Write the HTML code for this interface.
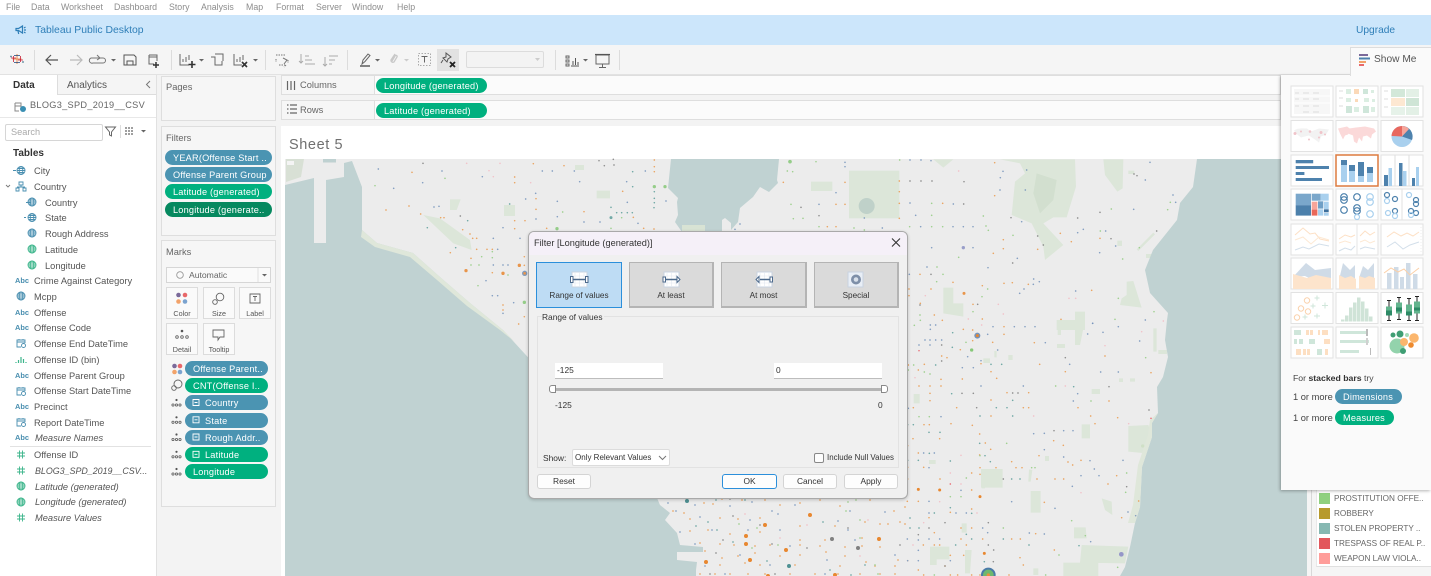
<!DOCTYPE html>
<html><head><meta charset="utf-8"><title>Tableau Public Desktop</title>
<style>
*{box-sizing:border-box}
html,body{margin:0;padding:0;width:1431px;height:576px;overflow:hidden;background:#f3f3f3;font-family:"Liberation Sans",sans-serif;color:#444}
.a{position:absolute;white-space:nowrap}
.t{position:absolute;white-space:nowrap;font-size:9.3px;line-height:12px;color:#555;margin-top:1px}
.m{position:absolute;top:1px;font-size:8.8px;line-height:12px;color:#8d8d8d;white-space:nowrap}
.i{font-style:italic}
.card{position:absolute;background:#f6f6f6;border:1px solid #dedede}
.p{position:absolute;border-radius:8px;color:#fff;font-size:9.2px;line-height:16px;height:15px;padding-left:8px;white-space:nowrap;overflow:hidden;letter-spacing:.2px}
.b{background:#4b94b2}.g{background:#00b07f}.dg{background:#06895f}
.mc{position:absolute;width:32px;height:32px;background:#fafafa;border:1px solid #dcdcdc;font-size:7.2px;color:#555;text-align:center;padding-top:21px;line-height:9px}
.db{position:absolute;top:262px;height:46px;background:#dadada;border:1px solid #b4b4b4;border-width:1px 2px 2px 1px;font-size:8.2px;color:#333;text-align:center;line-height:12px;padding-top:27px}
.btn{position:absolute;top:474px;height:15px;background:#fdfdfd;border:1px solid #d4d4d4;border-radius:3px;font-size:8.4px;color:#333;text-align:center;line-height:13px}
.d{font-size:8.4px;color:#333;position:absolute;line-height:12px;white-space:nowrap}
.inp{position:absolute;top:363px;height:16px;width:108px;background:#fff;border-bottom:1px solid #bdbdbd;font-size:8.4px;color:#333;line-height:15px;padding-left:2px}
.lg{position:absolute;left:1334px;font-size:8.2px;color:#666;line-height:12px;white-space:nowrap}
.sw{position:absolute;left:1319px;width:11px;height:11px}
svg{position:absolute;overflow:visible}
</style></head><body>

<!-- menu -->
<div class="a" style="left:0;top:0;width:1431px;height:15px;background:#fff"></div>
<div class="m" style="left:6px">File</div><div class="m" style="left:31px">Data</div><div class="m" style="left:61px">Worksheet</div><div class="m" style="left:114px">Dashboard</div><div class="m" style="left:169px">Story</div><div class="m" style="left:201px">Analysis</div><div class="m" style="left:246px">Map</div><div class="m" style="left:276px">Format</div><div class="m" style="left:316px">Server</div><div class="m" style="left:352px">Window</div><div class="m" style="left:397px">Help</div>

<!-- blue bar -->
<div class="a" style="left:0;top:15px;width:1431px;height:30px;background:#cce6fb"></div>
<div class="a" style="left:35px;top:24px;font-size:10.4px;line-height:14px;color:#2f7fb8">Tableau Public Desktop</div>
<div class="a" style="left:1356px;top:24px;font-size:10.2px;line-height:14px;color:#2f7fb8">Upgrade</div>
<svg style="left:0;top:0" width="40" height="45" viewBox="0 0 40 45" fill="none" stroke="#2f7fb8" stroke-width="1.2"><path d="M16 28.5h2.5l4-2.500v7l-4-2.500H16zM18 31l.7 3M24 28l1.500-1M24 30h2M24 32l1.500 1"/></svg>

<!-- toolbar -->
<div class="a" style="left:0;top:45px;width:1431px;height:30px;background:#f5f5f5;border-bottom:1px solid #e2e2e2"></div>
<div class="a" style="left:437px;top:49px;width:22px;height:22px;background:#e2e2e2"></div>
<div class="a" style="left:466px;top:51px;width:78px;height:17px;background:#f3f3f3;border:1px solid #dcdcdc;border-radius:2px"></div>
<svg style="left:0;top:45px" width="640" height="30" viewBox="0 45 640 30" fill="none" stroke="#555" stroke-width="1">
<path d="M34.500 50v20M171.500 50v20M265.500 50v20M347.500 50v20M555.500 50v20M619.500 50v20" stroke="#dcdcdc"/>
<g stroke-width=".8"><path d="M17 54v10M12.500 59h9" stroke="#e8762d"/><path d="M13.500 56v6M11 58h5M20.500 56v6M18 60h5" stroke="#c72037"/><path d="M14 62.500h6M14 55.500h6" stroke="#1f447a"/><path d="M11 55.500v2M10 56.500h2M23 61v2M22 62h2" stroke="#5b879b"/></g>
<path d="M58 60H46M51 55l-5 5 5 5" stroke="#555" stroke-width="1.200"/><path d="M70 60h12M77 55l5 5-5 5" stroke="#bbb" stroke-width="1.200"/>
<path d="M91 58h12a2.500 2.500 0 010 5H93a2.500 2.500 0 01-2-5M97 55l3 3-3 2" stroke="#777"/>
<path d="M111 59h5l-2.500 2.500z M199 59h5l-2.500 2.500z M253 59h5l-2.500 2.500z M375 59h5l-2.500 2.500z M583 59h5l-2.500 2.500z" fill="#666" stroke="none"/><path d="M404 59h5l-2.500 2.500z" fill="#ccc" stroke="none"/>
<path d="M124 55h10l2 2v8h-12zM127 65v-4h6v4"/>
<path d="M149 55h8v6M149 55v9h5M149 57h8" stroke="#666"/><path d="M156 62v6M153 65h6" stroke="#333" stroke-width="1.500"/>
<path d="M180 54v11h9M183 62v-3M186 62v-5M189 60v-5" stroke="#666"/><path d="M192 61v7M188.500 64.500h7" stroke="#333" stroke-width="1.600"/>
<path d="M211 57h4v8h7v-4M215 54h8v7" stroke="#666"/>
<path d="M234 54v11h8M237 62v-3M240 62v-5M243 60v-5" stroke="#666"/><path d="M242 62l5 5M247 62l-5 5" stroke="#333" stroke-width="1.600"/>
<path d="M276 55h9M276 59v3M288 60v3M279 65h6M286 65l-2 2" stroke="#777" stroke-dasharray="1.500 1"/><path d="M283 58l4 2-3 4" stroke="#777"/>
<path d="M301 54v9M299 61l2 2 2-2M305 56h4M305 60h7M305 64h10" stroke="#aaa"/>
<path d="M325 66v-9M323 64l2 2 2-2M329 56h9M329 60h6M329 64h3" stroke="#aaa"/>
<path d="M360 66h10" stroke="#444" stroke-width="1.300"/><path d="M362 64l1-4 5-6 2 1.500-5 6z" stroke="#666"/>
<path d="M395 54l-4 6a2 2 0 003 2l3-5a1 1 0 00-2-1l-3 5" stroke="#c8c8c8" stroke-width="1.300"/>
<rect x="418.500" y="53.500" width="12" height="12" stroke="#aaa" stroke-dasharray="1.500 1.500"/><path d="M421.500 56.500h6M424.500 56.500v6" stroke="#666"/>
<path d="M446 53l5 4-3 2-1 3-4-4 3-1zM443 60l-2 3" stroke="#555"/><path d="M450 62l5 5M455 62l-5 5" stroke="#222" stroke-width="1.800"/>
<path d="M535 58h5l-2.500 3z" fill="#ccc" stroke="none"/>
<path d="M566 56h3v2h-3zM566 60h3v2h-3zM566 64h3v2h-3z" stroke="#666"/><path d="M571 66h8M573 65v-4M575.500 65v-7M578 65v-3" stroke="#555"/>
<path d="M596 55h13v9h-13zM602.500 64v3M599 67.500h7" stroke="#666"/>
<path d="M595 54.500h15" stroke="#555" stroke-width="1.200"/>
</svg>

<!-- left data pane -->
<div class="a" style="left:0;top:75px;width:157px;height:501px;background:#fff;border-right:1px solid #e1e1e1"></div>
<div class="a" style="left:57px;top:75px;width:99px;height:20px;background:#f5f5f5;border-left:1px solid #ddd;border-bottom:1px solid #ddd"></div>
<div class="a" style="left:13px;top:79px;font-size:10px;line-height:13px;color:#333;font-weight:700">Data</div>
<div class="a" style="left:67px;top:79px;font-size:10px;line-height:13px;color:#555">Analytics</div>
<svg style="left:0;top:75px" width="157" height="70" viewBox="0 75 157 70" fill="none" stroke="#777">
<path d="M150 81l-3.500 3.500 3.500 3.500"/>
<path d="M15 103h6v5M15 103v8h4M15 106h6" stroke="#888"/><circle cx="23" cy="109" r="3" fill="#3a8fb3" stroke="none"/>
<circle cx="94.500" cy="131" r="2.700"/><path d="M92.500 133l-2 2.500" stroke-width="1.200"/>
<path d="M105.500 127h10l-4 5v4l-2 -1v-3z" stroke="#666"/><path d="M120.500 125v13" stroke="#ddd"/>
<path d="M125 128h8M125 131h8M125 134h8" stroke="#666" stroke-width="1.200" stroke-dasharray="2 1"/>
<path d="M141 130h5l-2.500 2.500z" fill="#666" stroke="none"/>
</svg>
<div class="a" style="left:30px;top:99px;font-size:9.2px;line-height:12px;color:#666;letter-spacing:.3px">BLOG3_SPD_2019__CSV</div>
<div class="a" style="left:0;top:117px;width:156px;height:1px;background:#e8e8e8"></div>
<div class="a" style="left:5px;top:124px;width:98px;height:17px;background:#fff;border:1px solid #d6d6d6;border-radius:2px;font-size:9.2px;line-height:15px;color:#aaa;padding-left:5px">Search</div>
<div class="a" style="left:13px;top:147px;font-size:10px;line-height:13px;color:#333;font-weight:700">Tables</div>

<div class="t" style="left:34px;top:164px">City</div>
<div class="t" style="left:34px;top:180px">Country</div>
<div class="t" style="left:45px;top:196px">Country</div>
<div class="t" style="left:45px;top:211px">State</div>
<div class="t" style="left:45px;top:227px">Rough Address</div>
<div class="t" style="left:45px;top:243px">Latitude</div>
<div class="t" style="left:45px;top:259px">Longitude</div>
<div class="t" style="left:34px;top:274px">Crime Against Category</div>
<div class="t" style="left:34px;top:290px">Mcpp</div>
<div class="t" style="left:34px;top:306px">Offense</div>
<div class="t" style="left:34px;top:321px">Offense Code</div>
<div class="t" style="left:34px;top:337px">Offense End DateTime</div>
<div class="t" style="left:34px;top:353px">Offense ID (bin)</div>
<div class="t" style="left:34px;top:369px">Offense Parent Group</div>
<div class="t" style="left:34px;top:384px">Offense Start DateTime</div>
<div class="t" style="left:34px;top:400px">Precinct</div>
<div class="t" style="left:34px;top:416px">Report DateTime</div>
<div class="t i" style="left:35px;top:431px">Measure Names</div>
<div class="a" style="left:10px;top:446px;width:141px;height:1px;background:#e2e2e2"></div>
<div class="t" style="left:34px;top:448px">Offense ID</div>
<div class="t i" style="left:35px;top:464px;font-size:8.9px">BLOG3_SPD_2019__CSV...</div>
<div class="t i" style="left:35px;top:480px">Latitude (generated)</div>
<div class="t i" style="left:35px;top:495px">Longitude (generated)</div>
<div class="t i" style="left:35px;top:511px">Measure Values</div>

<div class="a" style="left:15px;top:275px;font-size:7.4px;line-height:11px;color:#4a8fb0;font-weight:700">Abc</div>
<div class="a" style="left:15px;top:307px;font-size:7.4px;line-height:11px;color:#4a8fb0;font-weight:700">Abc</div>
<div class="a" style="left:15px;top:322px;font-size:7.4px;line-height:11px;color:#4a8fb0;font-weight:700">Abc</div>
<div class="a" style="left:15px;top:370px;font-size:7.4px;line-height:11px;color:#4a8fb0;font-weight:700">Abc</div>
<div class="a" style="left:15px;top:401px;font-size:7.4px;line-height:11px;color:#4a8fb0;font-weight:700">Abc</div>
<div class="a" style="left:15px;top:432px;font-size:7.4px;line-height:11px;color:#4a8fb0;font-weight:700">Abc</div>

<svg style="left:0;top:160px" width="40" height="370" viewBox="0 160 40 370" fill="none" stroke-width=".9">
<defs>
<g id="gl"><circle r="4"/><ellipse rx="1.800" ry="4"/><path d="M-4 0h8M-3.500-2h7M-3.500 2h7"/></g>
<g id="cal" stroke="#4a8fb0"><path d="M-4-3h8v2h-8zM-4-1v5h4M4-1v1M-2-4v1M2-4v1"/><circle cx="2.500" cy="2.500" r="2" fill="#fff"/></g>
<g id="num" stroke="#3cb58b"><path d="M-1.500-4v8M1.500-4v8M-4-1.500h8M-4 1.500h8"/></g>
</defs>
<g stroke="#4a8fb0">
<use href="#gl" x="21" y="170.500"/><path d="M13 170.500h3M31 202.500h-5M26 217.500h-2"/><use href="#gl" x="32" y="202"/><use href="#gl" x="32" y="217.500"/><use href="#gl" x="32" y="233"/><use href="#gl" x="21" y="296"/>
<path d="M6 185l2 2 2-2" stroke="#777"/><path d="M19 182h4v3h-4zM16 188h3v3h-3zM23 188h3v3h-3zM21 185v2M17.500 188v-1h7v1"/>
</g>
<g stroke="#3cb58b"><use href="#gl" x="32" y="249"/><use href="#gl" x="32" y="265"/><use href="#gl" x="21" y="486"/><use href="#gl" x="21" y="502"/></g>
<use href="#cal" x="21" y="343"/><use href="#cal" x="21" y="391"/><use href="#cal" x="21" y="422"/>
<path d="M16 363v-1M18.500 363v-3M21 363v-6M23.500 363v-4M26 363v-1" stroke="#3cb58b" stroke-width="1.200"/>
<use href="#num" x="21" y="454.500"/><use href="#num" x="21" y="470.500"/><use href="#num" x="21" y="517.500"/>
</svg>

<!-- middle cards -->
<div class="card" style="left:161px;top:76px;width:115px;height:45px"></div>
<div class="a" style="left:166px;top:81px;font-size:9.3px;line-height:12px;color:#666">Pages</div>
<div class="card" style="left:161px;top:126px;width:115px;height:110px"></div>
<div class="a" style="left:166px;top:132px;font-size:9.3px;line-height:12px;color:#666">Filters</div>
<div class="p b" style="left:165px;top:150px;width:107px">YEAR(Offense Start ..</div>
<div class="p b" style="left:165px;top:167px;width:107px">Offense Parent Group</div>
<div class="p g" style="left:165px;top:184px;width:107px">Latitude (generated)</div>
<div class="p dg" style="left:165px;top:202px;width:107px">Longitude (generate..</div>
<div class="card" style="left:161px;top:240px;width:115px;height:267px"></div>
<div class="a" style="left:166px;top:246px;font-size:9.3px;line-height:12px;color:#666">Marks</div>
<div class="a" style="left:166px;top:267px;width:105px;height:16px;background:#fafafa;border:1px solid #d6d6d6;font-size:8.6px;line-height:14px;color:#666;padding-left:22px">Automatic</div>
<div class="mc" style="left:166px;top:287px;height:32px">Color</div>
<div class="mc" style="left:203px;top:287px;height:32px">Size</div>
<div class="mc" style="left:239px;top:287px;height:32px">Label</div>
<div class="mc" style="left:166px;top:323px">Detail</div>
<div class="mc" style="left:203px;top:323px">Tooltip</div>
<div class="p b" style="left:185px;top:361px;width:83px">Offense Parent..</div>
<div class="p g" style="left:185px;top:378px;width:83px">CNT(Offense I..</div>
<div class="p b" style="left:185px;top:395px;width:83px;padding-left:20px">Country</div>
<div class="p b" style="left:185px;top:413px;width:83px;padding-left:20px">State</div>
<div class="p b" style="left:185px;top:430px;width:83px;padding-left:20px">Rough Addr..</div>
<div class="p g" style="left:185px;top:447px;width:83px;padding-left:20px">Latitude</div>
<div class="p g" style="left:185px;top:464px;width:83px">Longitude</div>
<svg style="left:160px;top:260px" width="120" height="225" viewBox="160 260 120 225" fill="none" stroke="#666" stroke-width=".9">
<circle cx="180" cy="275" r="3.300" stroke="#999"/><path d="M262 274h5l-2.500 2.500z" fill="#666" stroke="none"/><path d="M258 268v14" stroke="#ddd"/>
<circle cx="178.500" cy="295" r="2.300" fill="#7b6a9a" stroke="none"/><circle cx="185" cy="295" r="2.300" fill="#e8686a" stroke="none"/><circle cx="178.500" cy="301.500" r="2.300" fill="#f2a36a" stroke="none"/><circle cx="185" cy="301.500" r="2.300" fill="#7ba3cf" stroke="none"/>
<circle cx="220" cy="297" r="3.800"/><circle cx="215" cy="302" r="2.300"/>
<path d="M250 294h10v9h-10zM253 296.500h4M255 296.500v4.500"/>
<circle cx="182" cy="331" r="1.300" fill="#555" stroke="none"/><circle cx="177" cy="337" r="1.300"/><circle cx="182" cy="337" r="1.300"/><circle cx="187" cy="337" r="1.300"/>
<path d="M213 330h11v7h-4l-2 3v-3h-5z"/>
<circle cx="174.500" cy="366" r="2.300" fill="#7b6a9a" stroke="none"/><circle cx="180" cy="366" r="2.300" fill="#e8686a" stroke="none"/><circle cx="174.500" cy="372" r="2.300" fill="#f2a36a" stroke="none"/><circle cx="180" cy="372" r="2.300" fill="#7ba3cf" stroke="none"/>
<circle cx="178" cy="384" r="4"/><circle cx="174" cy="388" r="2.300"/>
<g id="dt"><circle cx="176.500" cy="400" r="1.100" fill="#555" stroke="none"/><circle cx="173" cy="405" r="1.100"/><circle cx="176.500" cy="405" r="1.100"/><circle cx="180" cy="405" r="1.100"/></g>
<use href="#dt" y="17.300"/><use href="#dt" y="34.500"/><use href="#dt" y="51.800"/><use href="#dt" y="69"/>
<g stroke="#fff" stroke-width=".9"><path d="M193 399.500h6v6h-6zM194.500 402.500h3M193 416.800h6v6h-6zM194.500 419.800h3M193 434h6v6h-6zM194.500 437h3M193 451.300h6v6h-6zM194.500 454.300h3"/></g>
</svg>

<!-- shelves -->
<div class="card" style="left:281px;top:75px;width:94px;height:20px"></div>
<div class="a" style="left:375px;top:75px;width:906px;height:20px;background:#fbfbfb;border:1px solid #dedede;border-left:0"></div>
<div class="card" style="left:281px;top:100px;width:94px;height:20px"></div>
<div class="a" style="left:375px;top:100px;width:906px;height:20px;background:#fbfbfb;border:1px solid #dedede;border-left:0"></div>
<div class="a" style="left:300px;top:79px;font-size:9.3px;line-height:12px;color:#666">Columns</div>
<div class="a" style="left:300px;top:104px;font-size:9.3px;line-height:12px;color:#666">Rows</div>
<div class="p g" style="left:376px;top:78px;width:111px">Longitude (generated)</div>
<div class="p g" style="left:376px;top:103px;width:111px">Latitude (generated)</div>
<svg style="left:280px;top:75px" width="30" height="45" viewBox="280 75 30 45" fill="none" stroke="#666"><path d="M287.500 81v9M291 81v9M294.500 81v9M287 82h1M290.500 82h1M294 82h1" stroke-width="1.200"/><path d="M287 106h1.500M290 106h7M287 110h1.500M290 110h7M287 114h1.500M290 114h7" stroke-width="1.200" transform="translate(0 -1)"/></svg>

<!-- worksheet -->
<div class="a" style="left:281px;top:126px;width:1000px;height:450px;background:#fff"></div>
<div class="a" style="left:289px;top:136px;font-size:14.5px;line-height:18px;color:#707070;letter-spacing:.6px">Sheet 5</div>

<!-- map -->
<svg style="left:285px;top:159px" width="1022" height="417" viewBox="285 159 1022 417">
<rect x="285" y="159" width="1022" height="417" fill="#ececec"/>
<!-- parks -->
<g fill="#dce6d9">
<path d="M286 159h18l-3 18-15 5z" fill="#d8e0d5"/>
<g transform="translate(280 130) scale(.33333)">
<path d="M430 255l50 10 90 65 5 30-55-20zM510 208h32l-12 32h-20zM672 225h33v33h-33zM885 105h27v15h-27zM950 182h40v23h-40z"/>
<path d="M1228 285h44v20h-44z"/>
</g>
<g transform="translate(780 130) scale(.33333)">
<rect x="207" y="122" width="151" height="143"/><circle cx="260" cy="228" r="24" fill="#bfd1c9"/>
<path d="M93 155h64v28H93zM660 88h225l3 82-28 92h-40l-30 18 60 65-55 45-5-40-35-70-60-25 10-100 30-25-15-30zM970 88h60l-2 87-16 10-37-50zM460 88h60l-30 25zM490 473h30v47h30v40l-60-10zM1040 455l20-2 25 80-65-8 5-20 15-10zM885 545h30v55h-85v-30h55z"/>
<path d="M770 130l60 20-10 60-40 40-20-60z" fill="#d2dfcf"/>
<path d="M1045 122h18v10h-18zM1012 332h14v16h-14zM1098 372h20v12h-20zM1070 358l50-50 5 5-50 50z"/>
</g>
<g transform="translate(905 320) scale(.33333)">
<path d="M670 318l60-3 10 30-15 55-55-5zM530 313h25v42h-25zM228 447h65v56h-65zM377 513h30v65h-30zM530 675l140 5-10 50-135-2zM475 728h105v40H475zM507 622h35l3 33h-38zM590 535l30 10 2 40-22-15zM75 680h58v38H95v17H75zM180 690h20l-5 70h-15zM510 0h30l-15 75h-15zM745 25h10v70h-10zM456 72h24v12h-24zM560 207h25v15h-25zM26 222h18v28H26zM268 93h7v19h-7zM310 105h13v15h-13zM458 0h10v45h-10zM170 610h15v28h-15zM385 745h15v20h-15zM230 483h10v22h-10zM760 90h26v12h-26zM642 175h12v11h-12zM675 175h15v10h-15zM420 408h12v15h-12zM372 448l10 2-5 35h-7zM72 420h20v12H72zM235 115h20v14h-20z"/>
</g>
</g>
<!-- water (absolute page coordinates) -->
<path fill="#c0d2d2" d="M285 185L314 178L314 243L326 243L326 180L344 177L344 163L352 161L362 187L362 230L377 243L413 253L440 277L470 303L503 330L657 498L660 505L670 513L665 520L677 533L680 545L703 547L703 552L677 552L677 560L697 562L696 570L696 576L285 576Z"/>
<path fill="#c0d2d2" d="M671 159L668 188L678 198L677 202L678 215L675 222L682 232L722 232L722 220L725 218L731 223L731 230L738 222L740 208L753 197L760 187L769 192L778 183L777 180L779 159Z"/>
<path fill="#c0d2d2" d="M1197 159L1193 187L1180 203L1177 220L1153 250L1145 270L1150 293L1168 313L1167 320L1165 340L1168 357L1163 377L1157 387L1158 413L1152 423L1152 437L1142 467L1140 507L1135 523L1130 547L1125 567L1120 576L1307 576L1307 159Z"/>
<!-- shore strips -->
<path fill="#dfe7da" d="M362 230L377 243L413 253L440 277L470 303L503 330L515 342L500 330L467 306L437 280L410 257L375 247L361 237Z"/>
<path fill="#dfe7da" d="M1158 413L1152 423L1152 437L1142 467L1140 507L1135 523L1128 523L1133 505L1138 465L1148 435L1150 420Z"/>
<rect x="682" y="225" width="23" height="7" fill="#d8e3d4"/>
<rect x="323" y="159" width="13" height="3.500" fill="#bfd1d1"/><rect x="287" y="161" width="7" height="4" fill="#f4f4f4"/>
<!-- dots zoom 7 -->
<g fill="none" stroke-linecap="round" transform="translate(280 130) scale(.33333)" stroke-width="5" opacity=".85">
<path stroke="#ea9a4e" d="M396 127h0M318 240h0M387 228h0M422 252h0M482 263h0M492 263h0M548 299h0M570 312h0M578 325h0M590 325h0M590 358h0M621 358h0M637 358h0M511 368h0M573 385h0M637 428h0M733 406h0M704 141h0M704 158h0M760 101h0M852 107h0M1123 90h0M1123 110h0M1123 125h0M704 272h0M735 272h0M768 238h0M768 206h0M800 295h0M1091 295h0M1122 297h0M1028 184h0M912 245h0M1060 262h0M704 296h0M733 380h0M669 525h0M669 540h0M716 582h0M733 560h0"/>
<path stroke="#7593bb" d="M295 117h0M428 158h0M341 175h0M486 123h0M607 140h0M462 231h0M477 229h0M787 123h0M817 123h0M883 123h0M899 155h0M1040 155h0M1096 123h0M1158 213h0M1042 217h0M832 214h0M767 190h0M737 207h0M768 267h0M832 260h0M912 276h0M960 276h0M1074 280h0M720 325h0M640 325h0M669 293h0M653 358h0M640 405h0M684 405h0M669 405h0M618 452h0M653 497h0M637 497h0M701 518h0M669 550h0M1365 298h0M1380 282h0"/>
<path stroke="#5d9e9a" d="M689 222h0M563 272h0M442 293h0M527 353h0M1123 185h0M1123 205h0M1123 218h0M1122 233h0M993 232h0M1010 248h0M1025 248h0M1042 248h0M1057 248h0M1058 125h0M1058 170h0"/>
<path stroke="#93cc82" d="M495 145h0M285 167h0M993 295h0M1025 263h0M848 246h0M605 380h0M637 383h0M637 365h0M573 405h0M597 405h0M684 435h0M594 467h0"/>
<path stroke="#808080" d="M429 100h0M541 258h0M1002 105h0M973 107h0M1000 88h0M957 92h0"/>
<path stroke="#f3bcc4" d="M560 100h0M660 100h0M627 122h0M640 140h0M752 158h0"/>
<path stroke="#87c878" stroke-width="10" d="M831 296h0M1155 170h0M1123 170h0M733 517h0"/>
<path stroke="#e8872f" stroke-width="10" d="M558 422h0M669 430h0M718 406h0"/>
<path stroke="#6f8db5" stroke-width="16" d="M734 430h0"/><path stroke="#e8872f" stroke-width="8" d="M734 430h0"/>
<path stroke="#5d9e9a" stroke-width="9" d="M993 263h0"/>
</g>
<!-- dots zoom 8 -->
<g fill="none" stroke-linecap="round" transform="translate(780 130) scale(.33333)" stroke-width="5" opacity=".85">
<path stroke="#7593bb" d="M195 97h0M195 110h0M390 90h0M423 90h0M453 92h0M740 120h0M669 124h0M661 143h0M660 180h0M736 180h0M168 188h0M117 223h0M390 219h0M407 256h0M520 222h0M253 264h0M307 294h0M422 290h0M519 290h0M550 290h0M579 290h0M1110 97h0M1096 150h0M1179 195h0M1187 217h0M1061 238h0M725 275h0M910 298h0M893 308h0M977 303h0M1007 348h0M959 368h0M455 353h0M579 353h0M712 385h0M624 413h0M441 411h0M388 433h0M761 447h0M778 455h0M760 463h0M719 490h0M732 477h0M887 483h0M1096 570h0M938 580h0"/>
<path stroke="#8b91c4" stroke-width="10" d="M550 353h0"/>
<path stroke="#ea9a4e" d="M10 157h0M195 157h0M358 153h0M358 185h0M358 220h0M195 223h0M168 223h0M142 290h0M168 290h0M358 265h0M488 220h0M644 98h0M644 197h0M670 329h0M670 356h0M640 370h0M773 358h0M874 335h0M960 325h0M841 310h0M607 467h0M672 460h0M697 458h0M745 463h0M935 481h0M420 433h0M453 477h0M519 457h0M387 477h0M387 497h0M421 520h0M579 523h0M463 555h0M487 571h0M607 567h0M843 568h0"/>
<path stroke="#e8872f" stroke-width="9" d="M552 490h0"/>
<path stroke="#93cc82" d="M108 95h0M22 123h0M38 125h0M33 223h0M40 266h0M69 265h0M117 290h0M222 294h0M253 300h0M359 90h0M389 290h0M455 290h0M488 290h0M455 220h0M455 256h0M610 258h0M618 288h0M625 301h0M699 316h0M536 382h0M471 411h0M489 433h0M470 455h0M623 477h0M606 500h0M579 545h0M403 586h0M420 555h0M421 571h0M1028 387h0M961 303h0M994 237h0M1171 217h0M1163 239h0M1078 353h0M1015 505h0M1122 545h0M1005 568h0"/>
<path stroke="#87c878" stroke-width="11" d="M30 95h0"/>
<path stroke="#808080" d="M63 232h0M117 257h0M390 153h0M423 153h0M552 155h0M456 153h0M551 222h0M693 263h0M773 318h0M790 345h0M698 399h0M960 247h0M893 264h0M993 326h0M1130 303h0M1062 132h0M1071 137h0M453 433h0M420 525h0M593 523h0"/>
<path stroke="#f3bcc4" d="M536 123h0M436 497h0M655 523h0M670 552h0M867 505h0M887 505h0M565 567h0M1150 573h0"/>
</g>
<!-- dots zoom 11 -->
<g fill="none" stroke-linecap="round" transform="translate(905 320) scale(.33333)" stroke-width="5">
<g opacity=".85">
<path stroke="#ea9a4e" d="M175 28h0M203 30h0M297 20h0M297 43h0M203 62h0M263 67h0M388 68h0M166 89h0M600 108h0M738 158h0M481 155h0M404 133h0M228 131h0M258 155h0M275 175h0M110 108h0M126 113h0M58 133h0M10 135h0M40 150h0M108 178h0M172 177h0M108 198h0M75 198h0M75 220h0M75 242h0M42 198h0M258 240h0M155 263h0M25 263h0M306 218h0M371 218h0M355 263h0M371 263h0M258 288h0M519 263h0M612 243h0M557 288h0M638 293h0M570 311h0M138 311h0M202 316h0M224 342h0M24 356h0M104 356h0M241 369h0M257 388h0M446 362h0M475 376h0M402 407h0M489 426h0M503 435h0M528 421h0M635 467h0M609 492h0M701 543h0M650 593h0M418 547h0M448 690h0M345 713h0M355 735h0M200 510h0M7 544h0M40 544h0M200 567h0M136 577h0M72 593h0M224 405h0M225 443h0M225 463h0M273 443h0M333 443h0M351 443h0M320 425h0M200 459h0M105 477h0M56 442h0M8 377h0M40 399h0M8 442h0M8 477h0M396 477h0M450 477h0M476 477h0M57 314h0M73 314h0M168 624h0M200 624h0M88 638h0M168 657h0M233 657h0M320 657h0M346 657h0M392 641h0M55 675h0M88 675h0M104 675h0M184 675h0M136 706h0M176 706h0M8 722h0M120 738h0M40 750h0M56 765h0M136 765h0M158 765h0M200 765h0M225 765h0M312 765h0"/>
<path stroke="#7593bb" d="M76 15h0M92 15h0M76 28h0M248 43h0M264 20h0M328 20h0M360 20h0M390 20h0M42 75h0M60 60h0M75 60h0M92 60h0M110 60h0M75 75h0M421 68h0M188 110h0M278 90h0M228 122h0M494 133h0M172 143h0M205 143h0M587 156h0M640 156h0M355 198h0M228 198h0M518 221h0M505 243h0M476 332h0M504 332h0M418 340h0M386 341h0M418 389h0M476 411h0M568 447h0M582 467h0M528 467h0M502 499h0M654 421h0M555 422h0M669 576h0M692 587h0M450 565h0M320 545h0M72 544h0M72 579h0M153 579h0M184 579h0M168 511h0M72 443h0M88 399h0M56 399h0M10 265h0M108 290h0M373 639h0M418 642h0M233 624h0M248 638h0M40 660h0M7 657h0M72 657h0M104 657h0M40 691h0M8 722h0M40 722h0M136 722h0M548 42h0M594 37h0M640 20h0M704 63h0M563 10h0M557 665h0"/>
<path stroke="#5d9e9a" d="M143 38h0M142 82h0M258 133h0M290 133h0M92 135h0M140 221h0M323 241h0M323 288h0M225 288h0M274 263h0M306 263h0M8 314h0M25 314h0M72 337h0M105 337h0M224 370h0M73 400h0M240 407h0M256 425h0M136 423h0M40 421h0M8 421h0M345 477h0M320 477h0M200 580h0M88 579h0M136 563h0M15 594h0M15 624h0M42 624h0M200 657h0M184 643h0M295 657h0M152 675h0M522 677h0M372 675h0M506 200h0M238 725h0"/>
<path stroke="#93cc82" d="M75 162h0M42 290h0M73 290h0M452 198h0M722 113h0M558 243h0M305 370h0M225 407h0M184 474h0M136 530h0M168 530h0M380 443h0M390 443h0M665 459h0M662 517h0M500 602h0M541 647h0M462 705h0M638 742h0M183 67h0M10 150h0M26 135h0M58 156h0M295 624h0M88 765h0M422 765h0"/>
<path stroke="#808080" d="M110 75h0M110 123h0M205 220h0M171 220h0M323 219h0M339 219h0M447 332h0M481 113h0M612 200h0M732 270h0M665 500h0M250 608h0M120 608h0M72 624h0M40 644h0M266 690h0M250 675h0M120 738h0M265 725h0M295 477h0M215 263h0"/>
<path stroke="#f3bcc4" d="M230 15h0M600 77h0M30 173h0M481 198h0M386 288h0M168 406h0M136 459h0M168 492h0M528 518h0M104 545h0M56 608h0M24 675h0M216 579h0M671 311h0M710 35h0"/>
<path stroke="#e8606a" d="M42 92h0M738 295h0M136 492h0"/>
</g>
<path stroke="#87c878" stroke-width="10" d="M200 90h0"/>
<path stroke="#e8872f" stroke-width="9" d="M238 700h0M40 508h0M104 510h0M225 530h0"/>
<circle cx="217" cy="47" r="9" fill="#7593bb"/><circle cx="217" cy="47" r="4.500" fill="#e8872f"/>
<circle cx="649" cy="703" r="7" fill="#9596c8"/><circle cx="713" cy="378" r="5" fill="#cfe0c6"/>
<circle cx="250" cy="765" r="22" fill="#4a7aa8"/><circle cx="250" cy="765" r="16" fill="#6fb86e"/><circle cx="250" cy="765" r="5" fill="#ea8d3a"/>
</g>
<!-- dots bottom centre (page coordinates) -->
<g fill="none" stroke-linecap="round" stroke-width="1.700">
<g opacity=".85">
<path stroke="#ea9a4e" d="M673 511h0M684 513h0M704 503h0M713 504h0M722 499h0M742 500h0M765 500h0M780 505h0M800 503h0M820 500h0M840 506h0M870 500h0M894 511h0M905 507h0M690 519h0M720 518h0M738 519h0M760 518h0M800 526h0M835 526h0M865 522h0M888 524h0M900 522h0M690 531h0M708 530h0M730 534h0M760 532h0M800 540h0M825 540h0M862 538h0M880 524h0M905 524h0M700 543h0M720 544h0M734 545h0M755 546h0M770 545h0M800 545h0M820 546h0M845 547h0M862 546h0M880 547h0M705 551h0M722 558h0M738 556h0M755 553h0M780 556h0M800 555h0M826 552h0M845 556h0M866 562h0M898 560h0M720 565h0M745 563h0M760 565h0M795 565h0M840 566h0M875 566h0M895 566h0M700 574h0M715 574h0M730 574h0M748 574h0M765 574h0M790 574h0M815 574h0M838 574h0M860 574h0M880 574h0M895 574h0"/>
<path stroke="#7593bb" d="M668 503h0M676 511h0M695 505h0M730 506h0M752 502h0M772 511h0M795 505h0M850 511h0M700 517h0M750 520h0M778 514h0M838 521h0M885 512h0M680 532h0M712 530h0M748 530h0M780 530h0M848 530h0M855 540h0M695 544h0M740 555h0M790 546h0M827 560h0M705 566h0M770 565h0M895 555h0M725 574h0M825 574h0"/>
<path stroke="#5d9e9a" d="M716 500h0M745 500h0M708 522h0M696 526h0M717 530h0M733 542h0M823 522h0M767 561h0M865 565h0M830 570h0M851 575h0"/>
<path stroke="#93cc82" d="M848 502h0M856 500h0M846 511h0M739 524h0M757 528h0M860 520h0M752 548h0M778 545h0M860 538h0M875 565h0M878 574h0"/>
<path stroke="#808080" d="M730 499h0M733 516h0M760 525h0M723 540h0M772 544h0M807 548h0M848 528h0M900 545h0M716 553h0M710 574h0M775 574h0"/>
<path stroke="#f3bcc4" d="M745 514h0M807 525h0M868 520h0M780 538h0M860 556h0"/>
</g>
<path stroke="#e8872f" stroke-width="4" d="M810 515h0M765 525h0M746 536h0M746 544h0M786 550h0M879 539h0M706 562h0M750 560h0M768 576h0M835 575h0"/>
<path stroke="#808080" stroke-width="4" d="M832 539h0M858 548h0"/><path stroke="#4f9193" stroke-width="4" d="M789 566h0M687 501h0"/>
</g>
</svg>

<!-- legend -->
<div class="a" style="left:1307px;top:490px;width:124px;height:86px;background:#f5f5f5"></div>
<div class="a" style="left:1311px;top:490px;width:1px;height:86px;background:#d8d8d8"></div>
<div class="a" style="left:1316px;top:490px;width:115px;height:77px;background:#fff;border-bottom:1px solid #e0e0e0;border-left:1px solid #e8e8e8"></div>
<div class="sw" style="top:493px;background:#8fd07f"></div><div class="lg" style="top:493px">PROSTITUTION OFFE..</div>
<div class="sw" style="top:508px;background:#b79a2d"></div><div class="lg" style="top:508px">ROBBERY</div>
<div class="sw" style="top:523px;background:#86b8b2"></div><div class="lg" style="top:523px">STOLEN PROPERTY ..</div>
<div class="sw" style="top:538px;background:#e2575c"></div><div class="lg" style="top:538px">TRESPASS OF REAL P..</div>
<div class="sw" style="top:553px;background:#ff9d9a"></div><div class="lg" style="top:553px">WEAPON LAW VIOLA..</div>

<!-- show me -->
<div class="a" style="left:1281px;top:75px;width:150px;height:415px;background:#fafafa;box-shadow:-1px 1px 3px rgba(0,0,0,.3)"></div>
<div class="a" style="left:1350px;top:47px;width:81px;height:29px;background:#fafafa;border-left:1px solid #ddd;border-top:1px solid #ddd"></div>
<div class="a" style="left:1374px;top:53px;font-size:10.2px;line-height:14px;color:#555">Show Me</div>
<svg style="left:1355px;top:50px" width="20" height="22" viewBox="1355 50 20 22"><rect x="1359" y="54" width="9" height="2" fill="#7b6a9a"/><rect x="1359" y="57.500" width="11" height="2" fill="#4e82ad"/><rect x="1359" y="61" width="7" height="2" fill="#f2a36a"/><rect x="1359" y="64" width="5" height="2" fill="#e8686a"/></svg>
<svg style="left:1281px;top:75px" width="150" height="290" viewBox="1281 75 150 290">
<defs>
<rect id="th" width="42" height="31" fill="#fff" stroke="#e2e2e2"/>
</defs>
<g>
<!-- row 1 -->
<g transform="translate(1291 86)"><use href="#th"/><g opacity=".5"><rect x="3" y="3" width="36" height="25" fill="#f0f0f0"/><path d="M4 7h4M12 7h6M22 7h6M4 13h4M12 13h6M22 13h6M4 20h4M12 20h6M22 20h6M12 26h6M22 26h6" stroke="#bbb"/><path d="M3 10h36M3 17h36" stroke="#fff"/></g></g>
<g transform="translate(1336 86)"><use href="#th"/><path d="M3 5h4M3 12h4M3 20h4" stroke="#ddd"/><g fill="#dbeee2"><rect x="10" y="3" width="5" height="5"/><rect x="27" y="3" width="5" height="5" fill="#cfe6da"/><rect x="10" y="12" width="5" height="4"/><rect x="35" y="4" width="3" height="3"/><rect x="28" y="12" width="5" height="4"/><rect x="36" y="13" width="3" height="3"/><rect x="10" y="20" width="6" height="7" fill="#cfe6da"/><rect x="18" y="21" width="5" height="5"/><rect x="27" y="20" width="6" height="7" fill="#cfe6da"/><rect x="35" y="21" width="4" height="5"/></g><rect x="18" y="3" width="5" height="5" fill="#fbd9b8"/><rect x="19" y="13" width="3" height="3" fill="#fbd9b8"/></g>
<g transform="translate(1381 86)"><use href="#th"/><path d="M3 5h4M3 13h4M3 21h4" stroke="#ddd"/><rect x="10" y="3" width="14" height="8" fill="#d3e8d9"/><rect x="25" y="3" width="13" height="8" fill="#e3f0e6"/><rect x="10" y="12" width="14" height="8" fill="#fde8d2"/><rect x="25" y="12" width="13" height="8" fill="#cfe5d6"/><rect x="10" y="21" width="14" height="8" fill="#e6f2e9"/><rect x="25" y="21" width="13" height="8" fill="#e3f0e6"/></g>
<!-- row 2 -->
<g transform="translate(1291 120.500)"><use href="#th"/><path d="M3 10c4-3 10-2 13-2l4 3 8-3 10 1-3 5-5 2-2 6-4-3-6-4-8 2-5-4z" fill="#f2f2f2"/><g fill="#f0c4ca"><circle cx="4" cy="13" r="1.500"/><circle cx="10" cy="11" r="1"/><circle cx="19" cy="11" r="1.300"/><circle cx="30" cy="12" r="1.500"/><circle cx="28" cy="17" r="1"/><circle cx="34" cy="14" r="1"/><circle cx="18" cy="19" r="1"/></g></g>
<g transform="translate(1336 120.500)"><use href="#th"/><path d="M2 8l9-2 4 3-3 5-3 1-2 4-3-6zM13 8l7-1 9-1 9 2 2 3-4 3-1 4-4-3-4 1-1 5-3-4-2 6-3-2-1-6-5-2z" fill="#fbd9d9"/></g>
<g transform="translate(1381 120.500)"><use href="#th"/><circle cx="21" cy="16" r="10.500" fill="#a9d0ee"/><path d="M21 16V5.500A10.500 10.500 0 0131 19.500z" fill="#4e82ad"/><path d="M21 16V5.500A10.500 10.500 0 0010.500 15.500z" fill="#e8685f"/><path d="M21 16V5.500a10 10 0 017 3z" fill="#f7a59a"/></g>
<!-- row 3 -->
<g transform="translate(1291 155)"><use href="#th"/><g fill="#4e82ad"><rect x="4.700" y="5" width="17.500" height="3.300"/><rect x="4.700" y="11" width="33.300" height="3"/><rect x="4.700" y="17" width="8.700" height="3"/><rect x="4.700" y="23" width="26.300" height="3"/></g></g>
<g transform="translate(1336 155)"><rect width="42" height="31" fill="#fff" stroke="#dd7b3f" stroke-width="1.500"/><g fill="#a9d0ee"><rect x="5" y="10" width="6" height="17"/><rect x="13" y="16" width="6" height="11"/><rect x="22" y="21" width="6" height="6"/><rect x="31" y="18" width="6" height="9"/></g><g fill="#4e82ad"><rect x="5" y="5" width="6" height="5"/><rect x="13" y="10" width="6" height="6"/><rect x="22" y="7" width="6" height="14"/><rect x="31" y="12" width="6" height="6"/></g></g>
<g transform="translate(1381 155)"><use href="#th"/><path d="M14 0v31M28 0v31" stroke="#ddd"/><g fill="#4e82ad"><rect x="3" y="20" width="4" height="11"/><rect x="18" y="8" width="3.500" height="23"/><rect x="31" y="23" width="3" height="8"/></g><g fill="#a9d0ee"><rect x="7.500" y="13" width="3.500" height="18"/><rect x="22" y="16" width="3.500" height="15"/><rect x="35" y="12" width="3" height="19"/></g></g>
<!-- row 4 -->
<g transform="translate(1291 189)"><use href="#th"/><rect x="4.700" y="4.700" width="15.300" height="11.700" fill="#7aa7cb"/><rect x="4.700" y="16.300" width="15.300" height="10.300" fill="#4c80ab"/><rect x="20.700" y="4.700" width="9" height="7" fill="#7aa7cb"/><rect x="29.700" y="4.700" width="8" height="7" fill="#a9d0ee"/><rect x="20.700" y="12.700" width="5.700" height="7.300" fill="#f7a59a"/><rect x="20.700" y="20.300" width="5.700" height="6.300" fill="#e9685a"/><rect x="27" y="12.300" width="5.300" height="7.300" fill="#6f9fc6"/><rect x="27" y="20.300" width="5.300" height="6.300" fill="#a9d0ee"/><rect x="33" y="12.700" width="4.700" height="7.300" fill="#a9d0ee"/><rect x="33" y="20.300" width="4.700" height="3" fill="#3d6f9c"/><rect x="33" y="24" width="4.700" height="2.700" fill="#a9d0ee"/></g>
<g transform="translate(1336 189)"><use href="#th"/><g fill="none" stroke-width="1.200"><g stroke="#4e82ad"><circle cx="8" cy="8" r="3.300"/><circle cx="8" cy="11" r="3.300"/><circle cx="21" cy="8" r="3.300"/><circle cx="21" cy="19" r="3.300"/><circle cx="21" cy="22" r="3.300"/><circle cx="8" cy="21" r="3.300"/></g><g stroke="#a9d0ee"><circle cx="34" cy="8" r="3.300"/><circle cx="34" cy="13" r="3.300"/><circle cx="34" cy="25" r="3.300"/><circle cx="21" cy="28" r="2.500"/></g></g></g>
<g transform="translate(1381 189)"><use href="#th"/><path d="M21 0v31" stroke="#e2e2e2"/><g fill="none" stroke-width="1.200"><g stroke="#4e82ad"><circle cx="6" cy="6" r="2.500"/><circle cx="14" cy="10" r="2.500"/><circle cx="14" cy="22" r="2.500"/><circle cx="35" cy="11" r="2.500"/><circle cx="35" cy="15" r="2.500"/><circle cx="30" cy="22" r="2.500"/><circle cx="35" cy="24" r="2.500"/></g><g stroke="#a9d0ee"><circle cx="6" cy="12" r="2.500"/><circle cx="7" cy="24" r="2.500"/><circle cx="14" cy="27" r="2.500"/><circle cx="28" cy="6" r="2.500"/><circle cx="30" cy="26" r="2.500"/></g></g></g>
<!-- row 5 -->
<g transform="translate(1291 224)" fill="none"><use href="#th"/><path d="M4 11l8-7 7 6 5-1 5 6 9 2" stroke="#fde0c5"/><path d="M4 16l8-3 8 7 8-7 10 3" stroke="#fde9d4"/><path d="M4 26l8-3 6 2 10-5 10 2" stroke="#d3dfea"/></g>
<g transform="translate(1336 224)" fill="none"><use href="#th"/><path d="M21 0v31" stroke="#e6e6e6"/><path d="M3 15l6-4 6 2 4-2M24 12l5-5 5 4 5-3" stroke="#fde0c5"/><path d="M3 19l6-2 6 2M24 18l5-2 5 3 5-2" stroke="#fde9d4"/><path d="M3 27l6-3 6 2 4-4M24 25l5-2 10 2" stroke="#d3dfea"/></g>
<g transform="translate(1381 224)" fill="none"><use href="#th"/><path d="M6 13l7-5 7 4 6-3 6 3 6-4" stroke="#fde0c5"/><path d="M6 23l8-5 8 7 7-4 9-3" stroke="#d3dfea"/><path d="M40 3v25" stroke="#eee" stroke-dasharray="1 2"/></g>
<!-- row 6 -->
<g transform="translate(1291 258)"><use href="#th"/><path d="M2 19l13-14 9 7 16-2v10l-16 3-10-5z" fill="#cfdbe7"/><path d="M2 16l14 4 9-3 15 3v11H2z" fill="#fde4cc"/></g>
<g transform="translate(1336 258)"><use href="#th"/><path d="M3 22l4-17 7 7 5-5v14H3zM23 20l4-12 5 4 6-7v15z" fill="#cfdbe7"/><path d="M3 17l6 3 6-2 5 3v10H3zM23 18l6 2 4-2 6 2v11H23z" fill="#fde4cc"/></g>
<g transform="translate(1381 258)"><use href="#th"/><g fill="#cfdbe7"><rect x="6" y="15" width="4.500" height="16"/><rect x="13" y="9" width="4.500" height="22"/><rect x="19" y="19" width="4" height="12"/><rect x="25" y="5" width="4.500" height="26"/><rect x="32" y="16" width="4.500" height="15"/></g><path d="M3 15l7-5 7 4 6-3 6 6 9-7" stroke="#fbd0a8" fill="none"/></g>
<!-- row 7 -->
<g transform="translate(1291 292.500)"><use href="#th"/><g fill="none" stroke="#fad2ad"><circle cx="6" cy="25" r="2.700"/><circle cx="10" cy="16" r="2.700"/><circle cx="17" cy="19" r="2.700"/><circle cx="16" cy="8" r="2.700"/></g><path d="M26 3v5M23.500 5.500h5M22 11v5M19.500 13.500h5M34 10v6M31 13h6M26 21v5M23 23.500h6M14 22v5M11.500 24.500h5" stroke="#cfe6da" fill="none"/></g>
<g transform="translate(1336 292.500)"><use href="#th"/><g fill="#cfe3d7"><rect x="5" y="27" width="3.500" height="2"/><rect x="9" y="23" width="3.500" height="6"/><rect x="13" y="15" width="3.500" height="14"/><rect x="17" y="10" width="3.500" height="19"/><rect x="21" y="5" width="3.500" height="24"/><rect x="25" y="9" width="3.500" height="20"/><rect x="29" y="16" width="3.500" height="13"/><rect x="33" y="24" width="3.500" height="5"/></g></g>
<g transform="translate(1381 292.500)"><use href="#th"/><path d="M8 8v20M6 8h4M6 28h4M18 5v22M16 5h4M16 27h4M28 6v22M26 6h4M26 28h4M36 4v24M34 4h4M34 28h4" stroke="#222" fill="none"/><g fill="#63b48e"><rect x="5" y="14" width="6" height="9"/><rect x="15" y="10" width="6" height="11"/><rect x="25" y="12" width="6" height="11"/><rect x="33" y="9" width="6" height="12"/></g><g fill="#2d8a66"><rect x="5" y="18" width="6" height="5"/><rect x="15" y="15" width="6" height="4"/><rect x="25" y="19" width="6" height="4"/><rect x="33" y="15" width="6" height="3"/></g></g>
<!-- row 8 -->
<g transform="translate(1291 327)"><use href="#th"/><g fill="#cfe6da"><rect x="3" y="3" width="7" height="5"/><rect x="3" y="12" width="3" height="5"/><rect x="8" y="12" width="4" height="5"/><rect x="18" y="12" width="6" height="5"/><rect x="26" y="22" width="5" height="6" /></g><g fill="#fddfc2"><rect x="15" y="3" width="3" height="5"/><rect x="19" y="3" width="3" height="5"/><rect x="27" y="3" width="2" height="5"/><rect x="31" y="3" width="6" height="5"/><rect x="33" y="12" width="6" height="5"/><rect x="5" y="22" width="5" height="6"/><rect x="12" y="22" width="3" height="6"/><rect x="16" y="22" width="3" height="6"/><rect x="34" y="22" width="3" height="6"/></g></g>
<g transform="translate(1336 327)"><use href="#th"/><rect x="4" y="4" width="26" height="3" fill="#cfe6da"/><rect x="4" y="13" width="29" height="3" fill="#cfe6da"/><rect x="4" y="23" width="19" height="3" fill="#cfe6da"/><rect x="30" y="2" width="2" height="7" fill="#bbb"/><rect x="30" y="11" width="2" height="7" fill="#d0d0d0"/><rect x="34" y="21" width="1" height="7" fill="#bbb"/></g>
<g transform="translate(1381 327)"><use href="#th"/><circle cx="16" cy="19" r="7.500" fill="#93d3ac"/><circle cx="12" cy="8" r="2.500" fill="#3f9e74"/><circle cx="19" cy="7" r="3.500" fill="#3f9e74"/><circle cx="26" cy="8" r="2" fill="#a5dcb9"/><circle cx="23" cy="15" r="4" fill="#fbb66d"/><circle cx="33" cy="11" r="4.800" fill="#fbb66d"/><circle cx="30" cy="18" r="2.800" fill="#ee8a2e"/><circle cx="22" cy="24" r="3" fill="#3f9e74"/></g>
</g>
</svg>
<div class="a" style="left:1293px;top:372px;font-size:8.7px;line-height:12px;color:#444">For <b style="color:#333">stacked bars</b> try</div>
<div class="a" style="left:1293px;top:391px;font-size:9.3px;line-height:12px;color:#444">1 or more</div>
<div class="a" style="left:1293px;top:412px;font-size:9.3px;line-height:12px;color:#444">1 or more</div>
<div class="p b" style="left:1335px;top:389px;width:67px;padding-left:8px">Dimensions</div>
<div class="p g" style="left:1335px;top:410px;width:59px;padding-left:8px">Measures</div>

<!-- dialog -->
<div class="a" style="left:528px;top:231px;width:380px;height:268px;background:#f0f0f0;border:1px solid #a9a9a9;border-radius:6px;overflow:hidden;box-shadow:0 1px 3px rgba(0,0,0,.2)"><div style="height:23px;background:#f5f0f8"></div></div>
<div class="d" style="left:534px;top:237px;font-size:9.2px">Filter [Longitude (generated)]</div>
<div class="db" style="left:536px;width:86px;background:#bedcf4;border:1px solid #2b8fdb">Range of values</div>
<div class="db" style="left:629px;width:85px">At least</div>
<div class="db" style="left:721px;width:86px">At most</div>
<div class="db" style="left:814px;width:85px">Special</div>
<div class="a" style="left:537px;top:316px;width:362px;height:152px;border:1px solid #e2e2e2"></div>
<div class="d" style="left:542px;top:311px;background:#f0f0f0;padding-right:1px;line-height:12px">Range of values</div>
<div class="inp" style="left:555px">-125</div>
<div class="inp" style="left:774px">0</div>
<div class="a" style="left:552px;top:388px;width:332px;height:3px;background:#b4b4b4"></div>
<div class="a" style="left:549px;top:385px;width:7px;height:8px;background:#fff;border:1px solid #888;border-radius:3px 0 0 3px"></div>
<div class="a" style="left:881px;top:385px;width:7px;height:8px;background:#fff;border:1px solid #888;border-radius:0 3px 3px 0"></div>
<div class="d" style="left:555px;top:399px">-125</div>
<div class="d" style="left:878px;top:399px">0</div>
<div class="d" style="left:543px;top:452px">Show:</div>
<div class="a" style="left:572px;top:449px;width:98px;height:17px;background:#fff;border:1px solid #dcdcdc;border-radius:2px;font-size:8px;color:#333;line-height:15px;padding-left:2px">Only Relevant Values</div>
<div class="a" style="left:814px;top:453px;width:10px;height:10px;background:#fdfdfd;border:1px solid #888;border-radius:2px"></div>
<div class="d" style="left:827px;top:452px;font-size:7.9px">Include Null Values</div>
<div class="btn" style="left:537px;width:54px">Reset</div>
<div class="btn" style="left:722px;width:55px;border:1px solid #2b8fdb">OK</div>
<div class="btn" style="left:783px;width:54px">Cancel</div>
<div class="btn" style="left:844px;width:54px">Apply</div>
<svg style="left:528px;top:231px" width="380" height="240" viewBox="528 231 380 240" fill="none">
<path d="M892 238.500l8 8M900 238.500l-8 8" stroke="#333" stroke-width="1.100"/>
<path d="M659 456l3.500 3.500 3.500-3.500" stroke="#777"/>
<g stroke="#c8d3e0" fill="#fff"><rect x="572" y="272" width="15" height="15"/><rect x="664" y="272" width="15" height="15"/><rect x="757" y="272" width="15" height="15"/><rect x="848" y="272" width="15" height="15" fill="#e8eef6"/></g>
<path d="M575 272v15M579.500 272v15M584 272v15M572 276h15M572 283h15M667 272v15M671.500 272v15M676 272v15M664 276h15M664 283h15M760 272v15M764.500 272v15M769 272v15M757 276h15M757 283h15" stroke="#e2e8f0" stroke-width=".6"/>
<g stroke="#4d6a8c"><path d="M573 279.500h13" stroke-width="1.500"/><rect x="570.500" y="276.500" width="2.500" height="6" fill="#fff"/><rect x="585.500" y="276.500" width="2.500" height="6" fill="#fff"/>
<path d="M666 279.500h11" stroke-width="1.500"/><rect x="663" y="277" width="2.500" height="5" fill="#fff"/><path d="M677 276.500l3 3-3 3z" fill="#fff"/>
<path d="M760 279.500h10" stroke-width="1.500"/><rect x="770" y="277" width="2.500" height="5" fill="#fff"/><path d="M759 276.500l-3 3 3 3z" fill="#fff"/></g>
<circle cx="856" cy="279.500" r="5" fill="#7e8fa8"/><circle cx="856" cy="279.500" r="2.300" fill="#d8e0ea"/>
</svg>
</body></html>
